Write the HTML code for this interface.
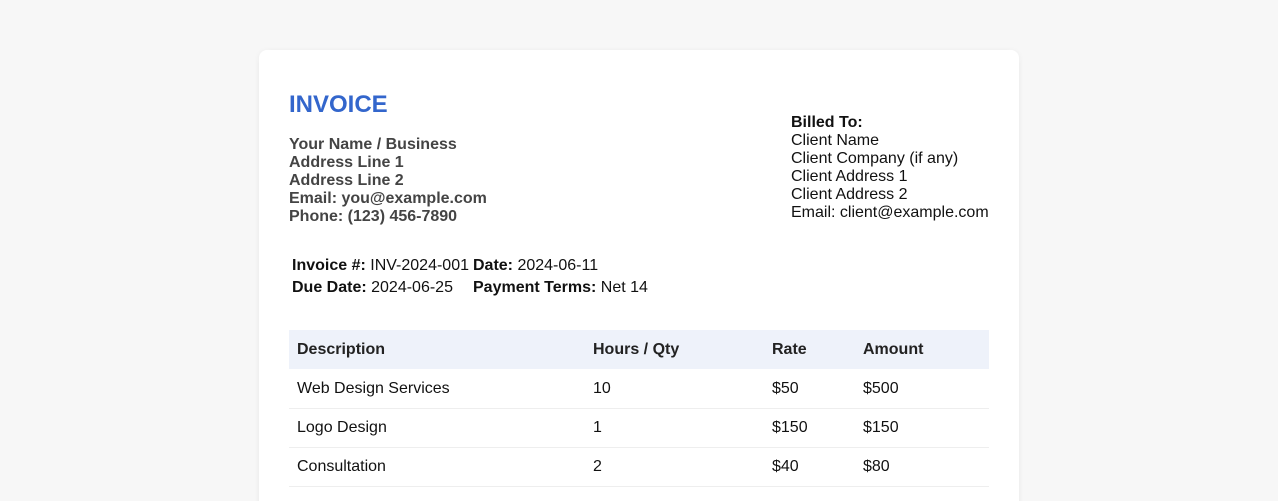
<!DOCTYPE html>
<html style="overflow:hidden"><head><style>
html,body{margin:0;width:1278px;height:501px;overflow:hidden}
body{background:#f7f7f7;font-family:"Liberation Sans",Arial,sans-serif;position:relative}
.card{position:absolute;left:259px;top:50px;width:760px;height:470px;background:#fff;border-radius:8px;box-shadow:0 1px 6px rgba(0,0,0,0.06)}
.abs{position:absolute}
h1{position:absolute;left:289px;top:91px;margin:0;font-size:24px;line-height:28px;color:#3366cc;font-weight:bold}
.from{left:289px;top:136px;font-size:16px;line-height:18px;font-weight:bold;color:#444}
.to{left:791px;top:114px;font-size:16px;line-height:18px;color:#111}
.meta{left:292px;top:256px;font-size:16px;color:#111}
.meta div{position:absolute;white-space:nowrap;line-height:20px}
table.items{position:absolute;left:289px;top:330px;width:700px;border-collapse:collapse;font-size:16px;color:#111}
.items td,.items th{height:39px;padding:1px 8px 0;text-align:left;border-bottom:1px solid #eee;box-sizing:border-box}
.items th{background:#eef2fa;font-weight:bold;color:#222;border-bottom:none}
</style></head><body>
<div class="card"></div>
<h1>INVOICE</h1>
<div class="abs from">Your Name / Business<br>Address Line 1<br>Address Line 2<br>Email: you@example.com<br>Phone: (123) 456-7890</div>
<div class="abs to"><b>Billed To:</b><br>Client Name<br>Client Company (if any)<br>Client Address 1<br>Client Address 2<br>Email: client@example.com</div>
<div class="abs meta">
<div style="left:0;top:0"><b>Invoice #:</b> INV-2024-001</div>
<div style="left:181px;top:0"><b>Date:</b> 2024-06-11</div>
<div style="left:0;top:22px"><b>Due Date:</b> 2024-06-25</div>
<div style="left:181px;top:22px"><b>Payment Terms:</b> Net 14</div>
</div>
<table class="items">
<tr><th style="width:296px">Description</th><th style="width:179px">Hours / Qty</th><th style="width:91px">Rate</th><th>Amount</th></tr>
<tr><td>Web Design Services</td><td>10</td><td>$50</td><td>$500</td></tr>
<tr><td>Logo Design</td><td>1</td><td>$150</td><td>$150</td></tr>
<tr><td>Consultation</td><td>2</td><td>$40</td><td>$80</td></tr>
</table>
</body></html>
